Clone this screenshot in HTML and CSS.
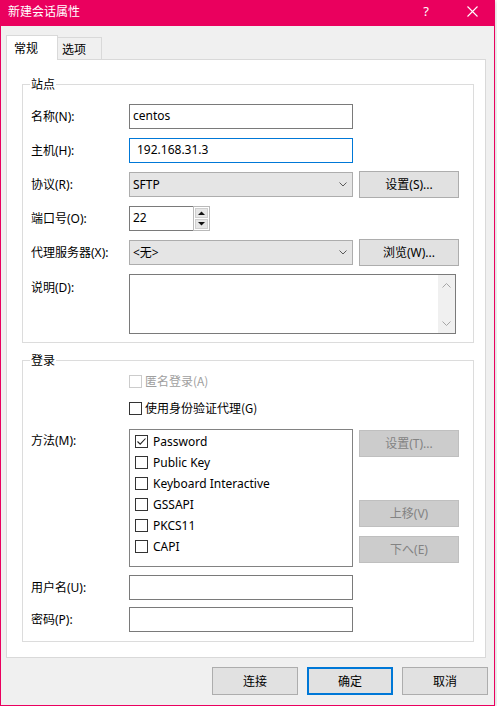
FILE: index.html
```html
<!DOCTYPE html>
<html lang="zh-CN">
<head>
<meta charset="utf-8">
<title>新建会话属性</title>
<link rel="stylesheet" href="styles.css">
</head>
<body>
<div class="window">
  <div class="titlebar">
    <span class="title">新建会话属性</span>
    <div class="caption">
      <span class="cap-btn help">?</span>
      <span class="cap-btn close"><svg width="11" height="11" viewBox="0 0 11 11"><path d="M0.5 0.5 L10.5 10.5 M10.5 0.5 L0.5 10.5" stroke="#fff" stroke-width="1.1" fill="none"/></svg></span>
    </div>
  </div>
  <div class="client">
    <div class="tabs">
      <div class="tab active">常规</div>
      <div class="tab">选项</div>
    </div>
    <div class="panel">
      <fieldset class="group site">
        <legend>站点</legend>
        <div class="rows">
          <div class="row">
            <span class="lbl">名称(N):</span>
            <div class="field wide">centos</div>
          </div>
          <div class="row">
            <span class="lbl">主机(H):</span>
            <div class="field wide focused">192.168.31.3</div>
          </div>
          <div class="row">
            <span class="lbl">协议(R):</span>
            <div class="select"><span>SFTP</span><svg width="8" height="5" viewBox="0 0 8 5"><path d="M0.5 0.5 L4 4 L7.5 0.5" fill="none" stroke="#5a5a5a"/></svg></div>
            <div class="btn side">设置(S)...</div>
          </div>
          <div class="row">
            <span class="lbl">端口号(O):</span>
            <div class="spin">
              <div class="field port">22</div>
              <div class="spin-btns">
                <div class="spin-btn"><svg width="7" height="4" viewBox="0 0 7 4"><path d="M0 4 L3.5 0.5 L7 4 Z" fill="#111"/></svg></div>
                <div class="spin-btn"><svg width="7" height="4" viewBox="0 0 7 4"><path d="M0 0 L3.5 3.5 L7 0 Z" fill="#111"/></svg></div>
              </div>
            </div>
          </div>
          <div class="row">
            <span class="lbl">代理服务器(X):</span>
            <div class="select"><span>&lt;无&gt;</span><svg width="8" height="5" viewBox="0 0 8 5"><path d="M0.5 0.5 L4 4 L7.5 0.5" fill="none" stroke="#5a5a5a"/></svg></div>
            <div class="btn side">浏览(W)...</div>
          </div>
          <div class="row tall">
            <span class="lbl top">说明(D):</span>
            <div class="memo">
              <div class="memo-text"></div>
              <div class="vscroll">
                <svg width="9" height="5" viewBox="0 0 9 5"><path d="M0.5 4.5 L4.5 0.5 L8.5 4.5" fill="none" stroke="#a6a6a6"/></svg>
                <svg width="9" height="5" viewBox="0 0 9 5"><path d="M0.5 0.5 L4.5 4.5 L8.5 0.5" fill="none" stroke="#a6a6a6"/></svg>
              </div>
            </div>
          </div>
        </div>
      </fieldset>

      <fieldset class="group login">
        <legend>登录</legend>
        <div class="check-row anon">
          <span class="cb disabled"></span><span class="dim">匿名登录(A)</span>
        </div>
        <div class="check-row agent">
          <span class="cb"></span><span>使用身份验证代理(G)</span>
        </div>
        <div class="method-row">
          <span class="lbl top">方法(M):</span>
          <div class="listbox">
            <div class="item"><span class="cb checked"><svg width="11" height="11" viewBox="0 0 11 11"><path d="M1.5 5.5 L4.2 8.2 L9.5 2.5" fill="none" stroke="#222" stroke-width="1.1"/></svg></span>Password</div>
            <div class="item"><span class="cb"></span>Public Key</div>
            <div class="item"><span class="cb"></span>Keyboard Interactive</div>
            <div class="item"><span class="cb"></span>GSSAPI</div>
            <div class="item"><span class="cb"></span>PKCS11</div>
            <div class="item"><span class="cb"></span>CAPI</div>
          </div>
          <div class="side-btns">
            <div class="btn off b-set">设置(T)...</div>
            <div class="btn off b-up">上移(V)</div>
            <div class="btn off b-down">下へ(E)</div>
          </div>
        </div>
        <div class="row user">
          <span class="lbl">用户名(U):</span>
          <div class="field wide"></div>
        </div>
        <div class="row pass">
          <span class="lbl">密码(P):</span>
          <div class="field wide"></div>
        </div>
      </fieldset>
    </div>
    <div class="footer">
      <div class="btn foot">连接</div>
      <div class="btn foot default">确定</div>
      <div class="btn foot">取消</div>
    </div>
  </div>
</div>
</body>
</html>
```

FILE: styles.css
```css
* { box-sizing: border-box; }

html, body {
  margin: 0;
  padding: 0;
  background: #ffffff;
}

body {
  font-family: "Noto Sans", "Noto Sans CJK SC", sans-serif;
  font-size: 12px;
  line-height: 16px;
  color: #000;
}

.window {
  width: 495px;
  height: 706px;
  background: #f0f0f0;
  border: 1px solid #ea005e;
  border-top: none;
  box-shadow: 1px 1px 5px rgba(0, 0, 0, 0.18);
  display: flex;
  flex-direction: column;
}

.titlebar {
  height: 26px;
  background: #ea005e;
  color: #fff;
  display: flex;
  align-items: flex-start;
  justify-content: space-between;
  margin: 0 -1px;
  padding-left: 8px;
}

.title {
  padding-top: 3px;
  font-family: "Noto Sans CJK SC", sans-serif;
  font-size: 12px;
  line-height: 16px;
}

.caption {
  display: flex;
}

.cap-btn {
  width: 46px;
  height: 22px;
  display: flex;
  align-items: center;
  justify-content: center;
}

.help {
  font-size: 13px;
  padding-top: 0;
}

.close svg { display: block; }

.client {
  padding: 9px 6px 10px 5px;
  display: flex;
  flex-direction: column;
}

.tabs {
  display: flex;
  align-items: flex-end;
  height: 24px;
}

.tab {
  display: flex;
  align-items: center;
  border: 1px solid #d9d9d9;
  border-bottom: none;
  font-family: "Noto Sans CJK SC", sans-serif;
}

.tab.active {
  width: 52px;
  height: 25px;
  margin-bottom: -1px;
  background: #fff;
  padding-left: 7px;
  position: relative;
  z-index: 1;
}

.tab:not(.active) {
  width: 45px;
  height: 22px;
  margin-left: -1px;
  background: #f0f0f0;
  padding-left: 4px;
}

.panel {
  width: 480px;
  background: #fff;
  border: 1px solid #d9d9d9;
  padding-bottom: 15px;
}

.group {
  border: 1px solid #dcdcdc;
  margin: 0 11px 0 15px;
  min-width: 0;
}

.group legend {
  padding: 0 1px;
  margin-left: -1px;
  line-height: 14px;
  font-family: "Noto Sans CJK SC", sans-serif;
}

.site {
  margin-top: 17px;
  padding: 13px 8px 8px 8px;
}

.login {
  margin-top: 10px;
  padding: 6px 8px 9px 8px;
}

.rows {
  display: flex;
  flex-direction: column;
  gap: 9px;
}

.row {
  display: flex;
  align-items: center;
  height: 25px;
}

.row.tall {
  height: 60px;
  align-items: flex-start;
}

.lbl {
  width: 98px;
  flex: none;
  white-space: nowrap;
}

.lbl.top { padding-top: 6px; }

.field {
  height: 25px;
  border: 1px solid #7a7a7a;
  background: #fff;
  padding-left: 3px;
  line-height: 22px;
}

.field.wide { width: 224px; }

.field.focused {
  border-color: #0078d7;
  padding-left: 7px;
}

.select {
  width: 224px;
  height: 25px;
  border: 1px solid #adadad;
  background: #e5e5e5;
  display: flex;
  align-items: center;
  justify-content: space-between;
  padding: 0 5px 0 3px;
}

.select svg { display: block; }

.btn {
  display: flex;
  align-items: center;
  justify-content: center;
  border: 1px solid #adadad;
  background: #e1e1e1;
  white-space: nowrap;
}

.btn.side {
  width: 100px;
  height: 27px;
  margin-left: 6px;
  flex: none;
}

.btn.off {
  width: 100px;
  height: 27px;
  background: #cccccc;
  border-color: #bfbfbf;
  color: #838383;
}

.spin {
  display: flex;
  width: 81px;
  height: 25px;
}

.field.port {
  width: 64px;
  border-right: none;
}

.spin-btns {
  width: 17px;
  height: 25px;
  border: 1px solid #b9b9b9;
  background: #fff;
  padding: 1px;
  display: flex;
  flex-direction: column;
  gap: 1px;
}

.spin-btn {
  flex: 1;
  background: #e6e6e6;
  border: 1px solid #cfcfcf;
  display: flex;
  align-items: center;
  justify-content: center;
}

.spin-btn svg { display: block; }

.memo {
  width: 327px;
  height: 60px;
  border: 1px solid #7a7a7a;
  background: #fff;
  display: flex;
}

.memo-text { flex: 1; }

.vscroll {
  width: 17px;
  background: #f0f0f0;
  display: flex;
  flex-direction: column;
  justify-content: space-between;
  align-items: center;
  padding: 8px 0 7px;
}

.vscroll svg { display: block; }

.check-row {
  display: flex;
  align-items: center;
  height: 16px;
  margin-left: 98px;
  gap: 3px;
  font-family: "Noto Sans CJK SC", sans-serif;
}

.check-row.agent { margin-top: 11px; }

.dim { color: #a0a0a0; }

.cb {
  width: 13px;
  height: 13px;
  flex: none;
  border: 1px solid #333333;
  background: #fff;
  display: flex;
  align-items: center;
  justify-content: center;
}

.cb.disabled { border-color: #cccccc; }

.cb svg { display: block; }

.method-row {
  display: flex;
  align-items: flex-start;
  margin-top: 13px;
}

.method-row .lbl.top { padding-top: 4px; }

.listbox {
  width: 224px;
  height: 138px;
  border: 1px solid #828282;
  background: #fff;
  padding-top: 1px;
  flex: none;
}

.item {
  height: 21px;
  display: flex;
  align-items: center;
  padding-left: 5px;
  gap: 5px;
}

.side-btns {
  display: flex;
  flex-direction: column;
  margin-left: 6px;
}

.b-set { margin-top: 1px; }
.b-up { margin-top: 43px; }
.b-down { margin-top: 9px; height: 28px; }

.row.user { margin-top: 8px; }
.row.pass { margin-top: 7px; }

.footer {
  display: flex;
  justify-content: flex-end;
  gap: 9px;
  margin-top: 9px;
}

.btn.foot {
  width: 86px;
  height: 28px;
  font-family: "Noto Sans CJK SC", sans-serif;
}

.btn.foot.default {
  border: 2px solid #0078d7;
}
```
